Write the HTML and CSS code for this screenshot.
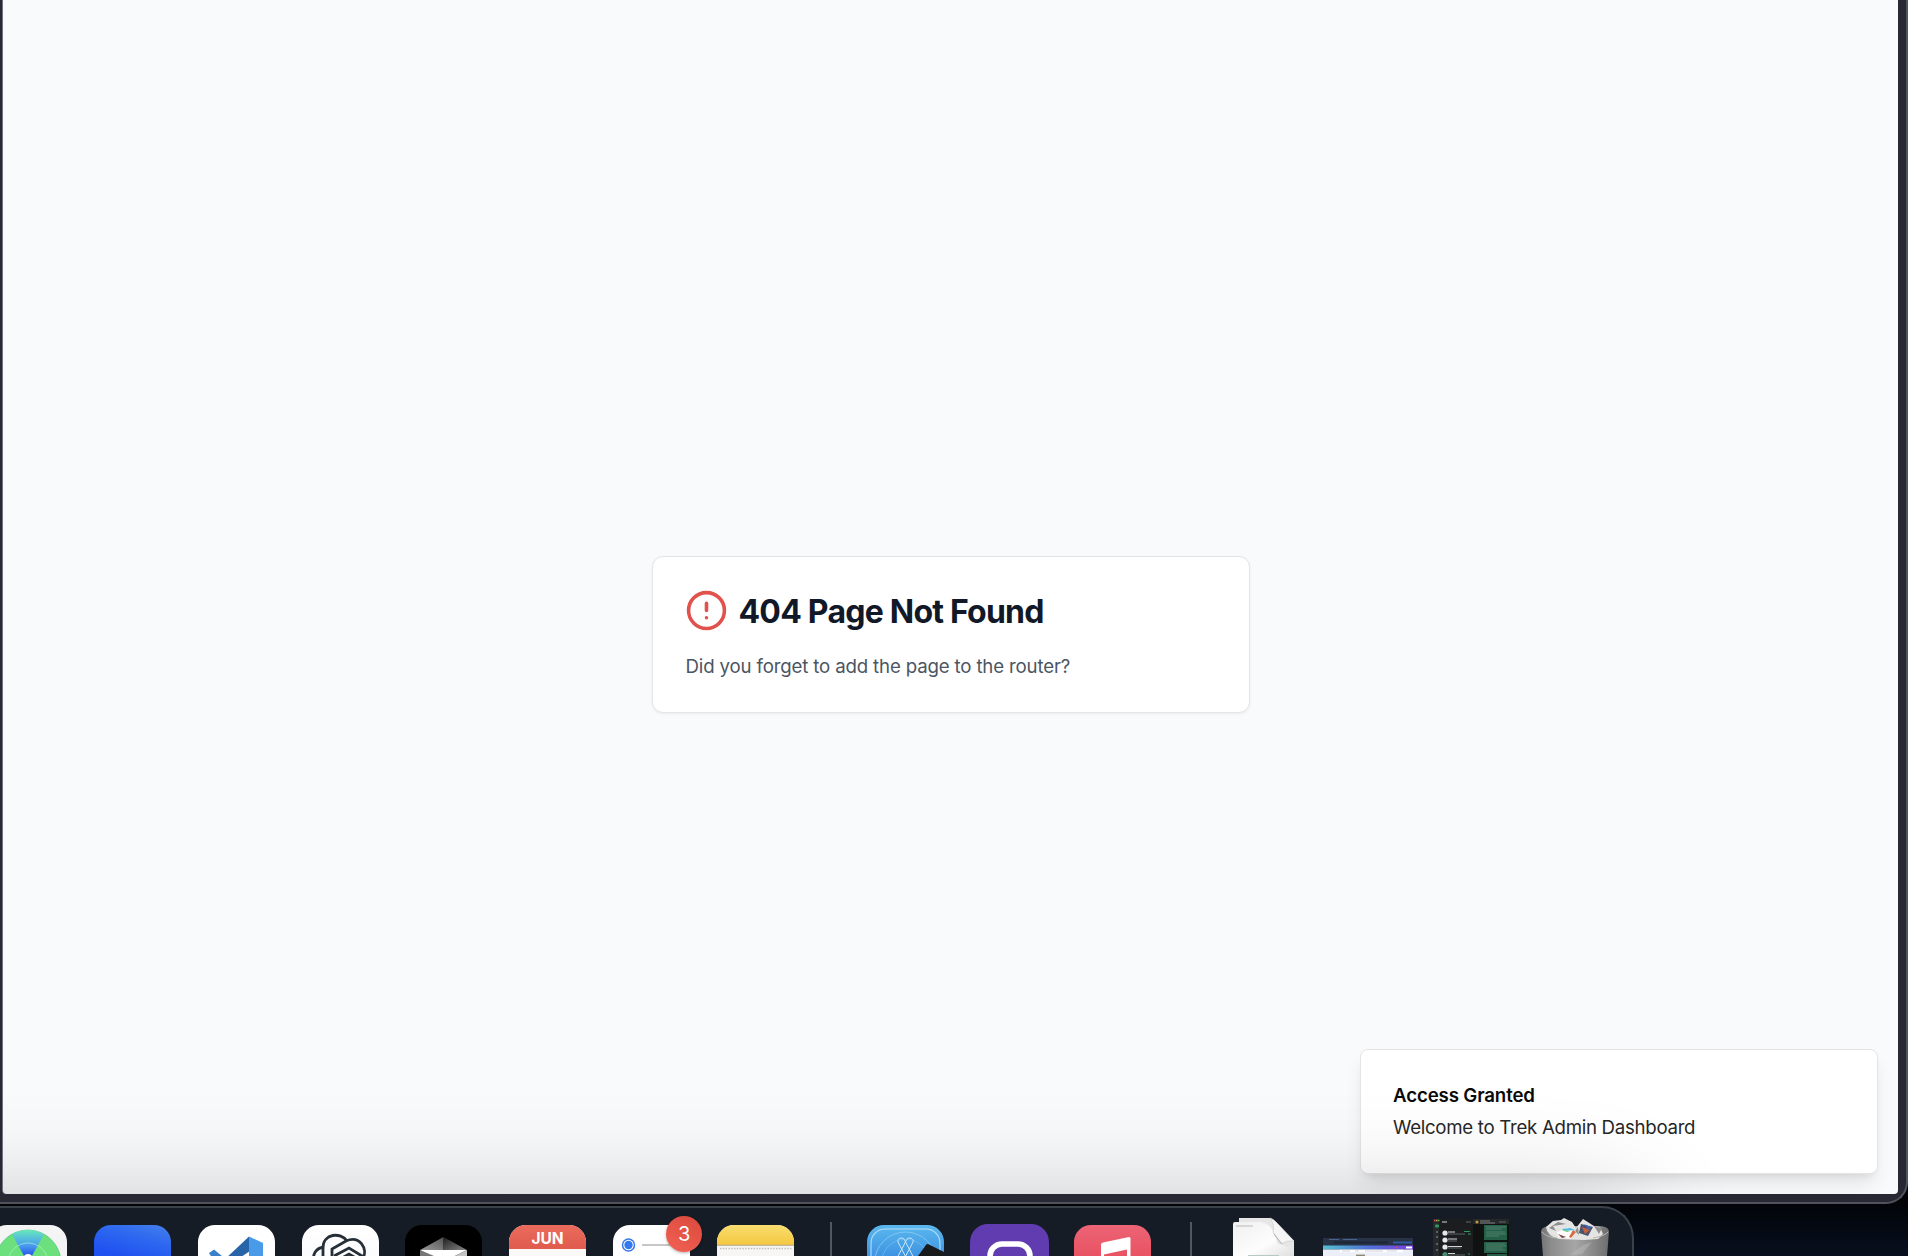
FILE: index.html
```html
<!DOCTYPE html>
<html lang="en">
<head>
<meta charset="utf-8">
<title>404 Page Not Found</title>
<link rel="stylesheet" href="styles.css">
</head>
<body>
<div class="window">
  <main class="page">
    <section class="card">
      <div class="card-head">
        <svg class="alert" viewBox="0 0 24 24" fill="none" stroke="#e0524b" stroke-width="2" stroke-linecap="round"><circle cx="12" cy="12" r="10"/><path d="M12 8v4M12 16h.01"/></svg>
        <h1>404 Page Not Found</h1>
      </div>
      <p class="hint">Did you forget to add the page to the router?</p>
    </section>
    <aside class="toast">
      <div class="toast-title">Access Granted</div>
      <div class="toast-text">Welcome to Trek Admin Dashboard</div>
    </aside>
  </main>
</div>
<nav class="dock">
  <svg class="app" viewBox="0 0 77 31">
    <defs>
      <linearGradient id="fan" x1="0" y1="0" x2="0" y2="1"><stop offset="0" stop-color="#67e8bd"/><stop offset=".45" stop-color="#4b9ff0"/><stop offset=".8" stop-color="#2450e8"/></linearGradient>
      <linearGradient id="blue" x1="1" y1="0" x2=".3" y2="1"><stop offset="0" stop-color="#4580ec"/><stop offset=".5" stop-color="#2c66f0"/><stop offset="1" stop-color="#1f50f0"/></linearGradient>
      <linearGradient id="white" x1="0" y1="0" x2="0" y2="1"><stop offset="0" stop-color="#fff"/><stop offset="1" stop-color="#f5f6fc"/></linearGradient>
      <linearGradient id="gold" x1="0" y1="0" x2="0" y2="1"><stop offset="0" stop-color="#f9de70"/><stop offset="1" stop-color="#f4c73f"/></linearGradient>
      <linearGradient id="sky" x1="0" y1="0" x2="0" y2="1"><stop offset="0" stop-color="#5ab8ee"/><stop offset="1" stop-color="#3f94e2"/></linearGradient>
      <linearGradient id="rose" x1="0" y1="0" x2="0" y2="1"><stop offset="0" stop-color="#ec6475"/><stop offset="1" stop-color="#e95363"/></linearGradient>
      <linearGradient id="coral" x1="0" y1="0" x2="0" y2="1"><stop offset="0" stop-color="#ea6b5c"/><stop offset="1" stop-color="#df5b4d"/></linearGradient>
      <linearGradient id="facetL" x1="0" y1="1" x2="1" y2="0"><stop offset="0" stop-color="#9a9a9a"/><stop offset="1" stop-color="#555"/></linearGradient>
      <linearGradient id="facetR" x1="0" y1="0" x2="1" y2="1"><stop offset="0" stop-color="#1d1d1d"/><stop offset="1" stop-color="#858585"/></linearGradient>
      <linearGradient id="paper" x1="0" y1="0" x2="1" y2="1"><stop offset="0" stop-color="#f0f0f0"/><stop offset=".6" stop-color="#fdfdfd"/><stop offset="1" stop-color="#dedede"/></linearGradient>
      <linearGradient id="bin" x1="0" y1="0" x2="1" y2="0"><stop offset="0" stop-color="#747474"/><stop offset=".15" stop-color="#8c8c8c"/><stop offset=".5" stop-color="#a6a6a6"/><stop offset=".8" stop-color="#858585"/><stop offset="1" stop-color="#6e6e6e"/></linearGradient>
      <linearGradient id="bar" x1="0" y1="0" x2="1" y2="0"><stop offset="0" stop-color="#55bfd0"/><stop offset=".5" stop-color="#4f74d8"/><stop offset="1" stop-color="#7a3fe0"/></linearGradient>
    </defs>
    <rect width="77" height="77" rx="17" fill="#f4f4f4"/>
    <circle cx="38" cy="38" r="33" fill="#6be07c" stroke="#57c985" stroke-width=".8"/>
    <path d="M38 38 22 9.200A33 33 0 0 1 54 9.200Z" fill="url(#fan)"/>
    <circle cx="38" cy="38" r="20" fill="none" stroke="#b9f3d4" stroke-width="1" opacity=".6"/>
    <circle cx="38" cy="34" r="5" fill="#fff"/>
  </svg>
  <svg class="app" viewBox="0 0 77 31"><path d="M0 31V17A17 17 0 0 1 17 0H60A17 17 0 0 1 77 17V31Z" fill="url(#blue)"/></svg>
  <svg class="app" viewBox="0 0 77 31">
    <rect width="77" height="77" rx="17" fill="#fff"/>
    <path d="M51 11.500 25 36h12L52 26Z" fill="#2864a8"/>
    <path d="m11 28 5-3.500 11 9-8 7Z" fill="#3c80cb"/>
    <path d="M51 11.500 65 18v18H51Z" fill="#4a9aea"/>
  </svg>
  <svg class="app" viewBox="0 0 77 31">
    <rect width="77" height="77" rx="17" fill="url(#white)"/>
    <g fill="none" stroke="#262f37" stroke-width="2.800">
      <path d="M21 36V23C21 8 39 7 45 16"/>
      <path d="M22 22C14 23 10 29 12 38"/>
      <path d="M30 36V24L44 16C58 10 66 24 61 33"/>
      <path d="M32 31 47 23 65 34M40 33 47 29 54 33"/>
    </g>
  </svg>
  <svg class="app" viewBox="0 0 77 31">
    <rect width="77" height="77" rx="17" fill="#000"/>
    <path d="M38.500 12 15 25 38.500 25Z" fill="url(#facetL)"/><path d="M38.500 12 62 25H38.500Z" fill="url(#facetR)"/>
    <path d="M15 25H62L46 33H29Z" fill="#fff"/><path d="M15 25 29 31H15Z" fill="#777"/><path d="M62 25 50 31H62Z" fill="#c4c4c4"/>
  </svg>
  <svg class="app" viewBox="0 0 77 31">
    <rect width="77" height="77" rx="17" fill="#faf9f7"/>
    <path d="M0 24V17A17 17 0 0 1 17 0H60A17 17 0 0 1 77 17V24Z" fill="url(#coral)"/>
    <text x="38.500" y="18.700" text-anchor="middle" class="month">JUN</text>
  </svg>
  <div class="badged">
    <svg class="app" viewBox="0 0 77 31">
      <rect width="77" height="77" rx="17" fill="#fff"/>
      <circle cx="15.500" cy="20" r="6" fill="none" stroke="#3b79e6" stroke-width="1.500"/><circle cx="15.500" cy="20" r="4.200" fill="#3478f0"/>
      <path d="M29 20H77" stroke="#b4b5b9" stroke-width="1.300"/>
    </svg>
    <span class="badge">3</span>
  </div>
  <svg class="app" viewBox="0 0 77 31">
    <rect width="77" height="77" rx="17" fill="#f7f6f4"/>
    <path d="M0 20V17A17 17 0 0 1 17 0H60A17 17 0 0 1 77 17V20Z" fill="url(#gold)"/>
    <path d="M0 20.300H77" stroke="#b5a98a" stroke-width="1"/><path d="M3 23.500H76" stroke="#bdbbb8" stroke-width="1.500" stroke-dasharray="1.400 1.400"/>
  </svg>
  <i class="divider"></i>
  <svg class="app" viewBox="0 0 77 31">
    <path d="M0 31V17A17 17 0 0 1 17 0H60A17 17 0 0 1 77 17V31Z" fill="url(#sky)"/>
    <rect x="4" y="4" width="69" height="69" rx="14" fill="none" stroke="#b5def8" stroke-width="1.100"/>
    <circle cx="38.500" cy="38" r="31" fill="none" stroke="#8bcbf3" stroke-width=".8"/><circle cx="38.500" cy="38" r="24" fill="none" stroke="#79bff0" stroke-width=".6"/>
    <g fill="none" stroke="#c9e8fb" stroke-width="1"><path d="m31 17 13 25M37 14 50 39M31 17c-1-4 4-5 6-3M46 17 33 42M40 14 27 39M46 17c1-4-4-5-6-3"/></g>
    <path d="m51 31 8-11q1-1.500 3-.5L77 27V31Z" fill="#191a1c"/>
  </svg>
  <svg class="app purple" viewBox="0 0 79 32"><rect width="79" height="79" rx="18" fill="#613bb0"/><rect x="20" y="20" width="40" height="40" rx="12" fill="none" stroke="#fff" stroke-width="5.600"/></svg>
  <svg class="app" viewBox="0 0 77 31">
    <path d="M0 31V17A17 17 0 0 1 17 0H60A17 17 0 0 1 77 17V31Z" fill="url(#rose)"/>
    <path d="M27 31V19.500q0-1.500 2-2L55 12q1.500 0 1.500 1.500V31H53V24.500L30 29.500V31Z" fill="#fff"/>
  </svg>
  <i class="divider second"></i>
  <svg class="doc" viewBox="0 0 61 39">
    <path d="M6 39V1H37Q40 2 43 5L61 24V39Z" fill="#e6e6e6"/>
    <path d="M0 39V7Q0 5 2 5H28Q38 7 41 17L45 27Q57 28 61 39Z" fill="url(#paper)"/>
    <path d="M37 1Q42 8 40 15L48 27Q54 23 61 24L43 5Q40 2 37 1Z" fill="#f5f5f5" stroke="#ccc" stroke-width=".7"/>
    <path d="M41 17 49 27M3 9H20" stroke="#aaa" stroke-width=".8"/><path d="M15 38.500H46" stroke="#b8c9c5" stroke-width="1"/>
  </svg>
  <svg class="browser" viewBox="0 0 90 18">
    <rect width="90" height="18" rx="1" fill="#293347"/><path d="M6 1.500H16M20 1.500H34" stroke="#47658e" stroke-width="1"/><path d="M11 4.500H65" stroke="#1c2638" stroke-width="2"/><path d="M70 4.500H89" stroke="#315ba2" stroke-width="2"/>
    <rect y="7.500" width="90" height="4" fill="url(#bar)"/><rect y="11.500" width="90" height="6.500" fill="#eceef8"/>
    <rect x="83" y="8.500" width="6" height="2" fill="#fff"/><circle cx="74" cy="9.500" r="1" fill="#d84870"/>
    <path d="M17 13H80" stroke="#fff" stroke-width="2.400"/><path d="M19 13H27M32 13H36M42 13H60M64 13H74" stroke="#b8bdce" stroke-width=".7"/><path d="M33 17.300H42" stroke="#8d866c" stroke-width="1.400"/>
  </svg>
  <svg class="chat" viewBox="0 0 76 37">
    <rect width="76" height="37" fill="#1b1d1e"/><rect width="6" height="37" fill="#272a2b"/><rect x="40" y="5" width="36" height="32" fill="#101211"/><rect x="40" width="36" height="5" fill="#26292a"/>
    <path d="M1 1.500H2.500" stroke="#e5534b" stroke-width="1.500"/><path d="M3 1.500H4.500" stroke="#dba940" stroke-width="1.500"/><path d="M5 1.500H6.500" stroke="#55b75a" stroke-width="1.500"/>
    <rect x="2" y="5.500" width="4" height="3" rx="1" fill="#2b9a62"/><path d="M3 13H5M3 18H5M3 25H5M3 31H5" stroke="#707474" stroke-width="1.500"/>
    <g fill="#e4e7ec"><circle cx="12" cy="14" r="2.600"/><circle cx="12" cy="21" r="2.600"/><circle cx="12" cy="28" r="2.600"/></g><circle cx="12" cy="35.500" r="2.600" fill="#43896c"/>
    <path d="M9 3H14M15 13H22M15 20H24M15 27.500H29M15 34.500H22" stroke="#d4d6d6" stroke-width="1"/><path d="M15 15H32M15 22H24M15 29H28M15 36H32" stroke="#727676" stroke-width=".8"/>
    <path d="M31 12.500H37M35 15H38M35 35H37" stroke="#2f9a5e" stroke-width="1.200"/><path d="M33 3H38M66 3H73" stroke="#666" stroke-width="1"/><circle cx="44" cy="3" r="1.500" fill="#c49c35"/><path d="M47 2H57M47 4H62" stroke="#aaa" stroke-width=".7"/>
    <path d="M51 6H74V21H51ZM51 23H74V34H51ZM54 35H74V37H54Z" fill="#245f47"/>
    <path d="M53 8H73M53 10H69M53 13H72M53 15H73M53 17H66M53 25H72M53 27H73M53 29H70M53 31H72" stroke="#65917e" stroke-width=".7"/>
  </svg>
  <svg class="trash" viewBox="0 0 70 38">
    <path d="M1 13Q2 8 12 8H58Q68 8 69 13L67 38H3Z" fill="url(#bin)"/>
    <path d="m6 9 7-6 8-1 3-2 8 4 4 6 7-9 11 7 6 1 3 7-5 5-14 1-25-1Q7 18 6 9Z" fill="#e4e4e3"/>
    <path d="m9 10 9-6 8 2-13 2 3 5ZM38 9l-3 4 4 4ZM54 8l5 8 3-6Z" fill="#8e8e8e"/>
    <path d="m17 14 10-4 9 3-5 8-13-2Z" fill="#fafafa"/><path d="m22 11 8-1 5 2-11 1Z" fill="#4cbce4"/><path d="m22 12 8 1-3 1Z" fill="#70c85a"/><path d="m33 12 3 2-5 6-2-1Z" fill="#d76b42"/><path d="m18 16 8 3-4 1Z" fill="#78443e"/>
    <path d="m41 6 12 3-5 9-9-3Z" fill="#4a526c"/><path d="m42 9 8 3-5 4Z" fill="#c7613c"/><path d="m44 6 7 3-2 3Z" fill="#4468bc"/>
    <path d="M2 14Q6 19 17 20M53 20Q65 18 68 14" stroke="#b6b6b6" stroke-width="1" fill="none"/>
    <path d="m30 37 13-10 9-3-10 12Z" fill="#c0c0c0" opacity=".4"/>
  </svg>
</nav>
</body>
</html>
```
FILE: styles.css
```css
* { box-sizing: border-box; }
body {
  margin: 0;
  height: 1256px;
  overflow: hidden;
  display: flex;
  flex-direction: column;
  gap: 2px;
  background: linear-gradient(180deg, #020408 0, #020408 1204px, #07101f 1256px);
  font-family: Inter, "Liberation Sans", sans-serif;
}
.window {
  height: 1204px;
  margin-left: -8px;
  padding: 0 8px 8px 11px;
  background: #262934;
  border: solid #50535b;
  border-width: 0 2px 2px 0;
  border-radius: 0 0 22px 0;
}
.page {
  position: relative;
  height: 1194px;
  display: flex;
  flex-direction: column;
  align-items: center;
  padding-top: 556px;
  background: #f9fafc;
  border-radius: 0 0 4px 4px;
  overflow: hidden;
  box-shadow: -1px 0 #70737b;
}
/* Shade cast upward by the dock */
.page::after {
  content: "";
  position: absolute;
  left: -200px;
  right: 264px;
  top: 1206px;
  height: 200px;
  border-radius: 30px;
  box-shadow: 0 0 110px rgba(0, 0, 0, .23);
}
.card {
  width: 598px;
  height: 157px;
  padding: 32px;
  background: #fff;
  border: 1px solid #e4e5e7;
  border-radius: 11px;
  box-shadow: 0 1px 3px rgba(0, 0, 0, .06);
}
.card-head { display: flex; align-items: center; gap: 11px; height: 43px; }
.alert { width: 43px; height: 43px; }
h1 { margin: 0; padding-top: 1px; font-size: 32px; line-height: 43px; font-weight: 700; color: #111827; letter-spacing: -.77px; white-space: nowrap; }
.hint { margin: 21px 0 0 1px; font-size: 18.67px; line-height: 27px; color: #4b5563; letter-spacing: -.16px; white-space: nowrap; }
.toast {
  position: absolute;
  right: 20px;
  top: 1049px;
  width: 518px;
  height: 125px;
  padding: 32px;
  background: #fff;
  border: 1px solid #e4e4e5;
  border-radius: 8px;
  box-shadow: 0 13px 20px -4px rgba(0, 0, 0, .1), 0 5px 8px -5px rgba(0, 0, 0, .1);
  font-size: 18.67px;
  white-space: nowrap;
}
.toast-title { font-weight: 600; line-height: 27px; color: #0a0a0a; letter-spacing: -.13px; }
.toast-text { line-height: 27px; margin-top: 5px; color: #272727; letter-spacing: -.29px; }
.dock {
  width: 1644px;
  height: 80px;
  flex: none;
  margin-left: -10px;
  padding-top: 17px;
  display: flex;
  align-items: flex-start;
  gap: 26.85px;
  background: #151c26;
  border: solid #3b4148;
  border-width: 2px 2px 0 0;
  border-radius: 0 32px 0 0;
}
.app { display: block; width: 77px; height: 31px; flex: none; }
.purple { width: 79px; height: 32px; margin: -1px -1px 0; }
.badged { position: relative; flex: none; }
.badge {
  position: absolute;
  left: 53px;
  top: -9px;
  width: 36px;
  height: 36px;
  border-radius: 50%;
  background: linear-gradient(30deg, #f26254, #d9483c);
  box-shadow: 0 1px 3px rgba(0, 0, 0, .3);
  color: #fff;
  font-size: 20px;
  line-height: 36px;
  text-align: center;
}
.month { font: 700 15.500px Inter, sans-serif; fill: #fff; }
.divider { width: 2px; height: 34px; margin: -3px 8px 0 9.2px; background: #505861; flex: none; }
.second { margin-left: 11.5px; }
.doc { width: 61px; height: 39px; margin: -8px 0 0 6px; flex: none; }
.browser { width: 90px; height: 18px; margin: 13px -6px 0 2px; flex: none; }
.chat { width: 76px; height: 37px; margin-top: -6px; flex: none; }
.trash { width: 70px; height: 38px; margin: -7px 0 0 4px; flex: none; }
```
